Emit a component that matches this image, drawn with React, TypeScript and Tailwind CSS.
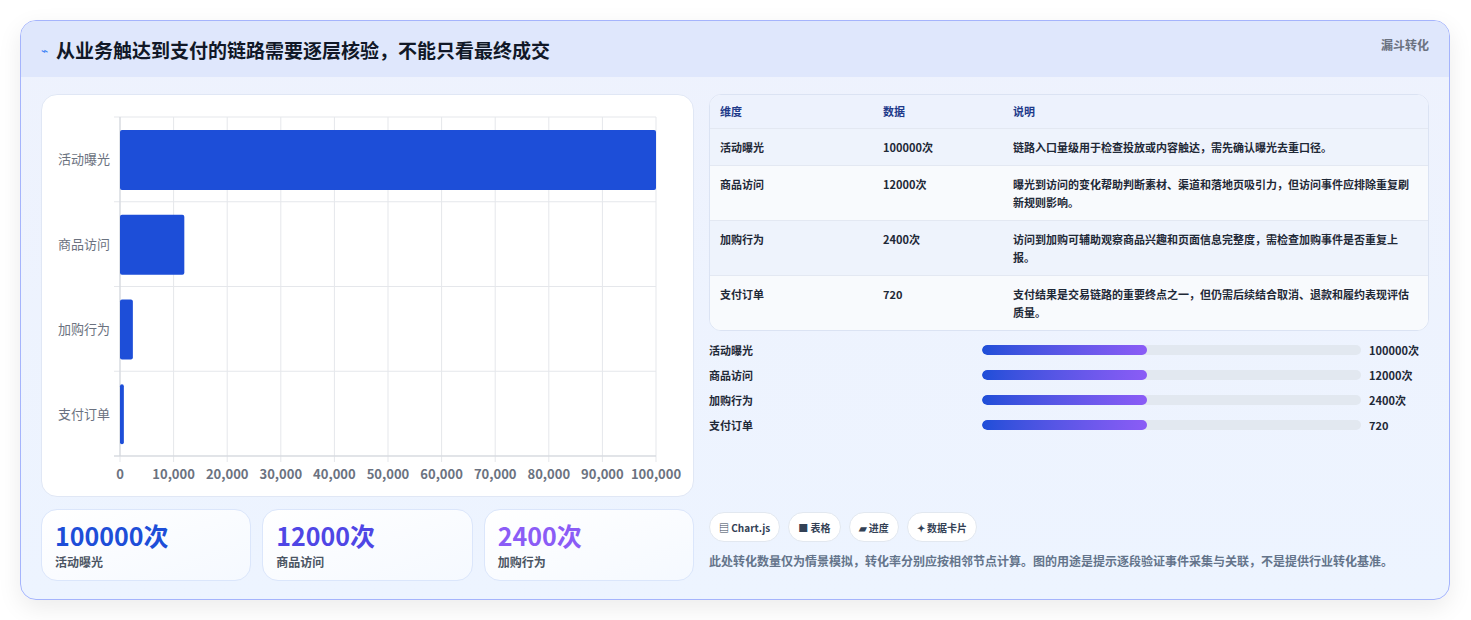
import React from 'react';

const rows = [
  { name: '活动曝光', value: 100000, text: '100000次', desc: '链路入口量级用于检查投放或内容触达，需先确认曝光去重口径。' },
  { name: '商品访问', value: 12000, text: '12000次', desc: '曝光到访问的变化帮助判断素材、渠道和落地页吸引力，但访问事件应排除重复刷新规则影响。' },
  { name: '加购行为', value: 2400, text: '2400次', desc: '访问到加购可辅助观察商品兴趣和页面信息完整度，需检查加购事件是否重复上报。' },
  { name: '支付订单', value: 720, text: '720', desc: '支付结果是交易链路的重要终点之一，但仍需后续结合取消、退款和履约表现评估质量。' },
];

const font = { fontFamily: '"Noto Sans CJK SC", "Noto Sans", sans-serif' };

// plot geometry inside the chart card
const L = 78, R = 614, T = 22, B = 361;

const BarChart: React.FC = () => {
  const rowH = (B - T) / 4;
  const ticks = Array.from({ length: 11 }, (_, i) => i * 10000);
  return (
    <svg width="653" height="403" className="block" style={font}>
      {ticks.map((t) => {
        const x = L + ((R - L) * t) / 100000;
        return (
          <g key={t}>
            <line x1={x} y1={T} x2={x} y2={B + 6} stroke="#e5e7eb" />
            <text x={x} y={384} textAnchor="middle" fontSize="13" fontWeight="600" fill="#6b7280">
              {t.toLocaleString('en-US')}
            </text>
          </g>
        );
      })}
      {[0, 1, 2, 3, 4].map((i) => (
        <line key={i} x1={L - 6} y1={T + i * rowH} x2={R} y2={T + i * rowH} stroke="#e5e7eb" />
      ))}
      <line x1={L} y1={T} x2={L} y2={B} stroke="#d1d5db" />
      <line x1={L - 6} y1={B} x2={R} y2={B} stroke="#d1d5db" />
      {rows.map((r, i) => {
        const y = T + i * rowH;
        const w = Math.max(3, ((R - L) * r.value) / 100000);
        return (
          <g key={r.name}>
            <rect x={L} y={y + 13} width={w} height={60} rx="2" fill="#1d4ed8" />
            <text x={L - 10} y={y + rowH / 2 + 5} textAnchor="end" fontSize="13" fill="#6b7280">
              {r.name}
            </text>
          </g>
        );
      })}
    </svg>
  );
};

const stats = [
  { v: '100000次', l: '活动曝光', c: 'text-[#1d4ed8]' },
  { v: '12000次', l: '商品访问', c: 'text-[#4f46e5]' },
  { v: '2400次', l: '加购行为', c: 'text-[#8b5cf6]' },
];

const chips = ['▤ Chart.js', '■ 表格', '▰ 进度', '✦ 数据卡片'];

export default function App() {
  return (
    <div className="min-h-[620px] bg-white px-5 pt-5" style={font}>
      <div className="w-[1430px] h-[580px] rounded-2xl border border-[#a5b4fc] bg-gradient-to-b from-[#eef2fd] to-[#edf4ff] shadow-[0_8px_24px_rgba(0,0,0,0.08)] overflow-hidden">
        <div className="h-[56px] bg-[#dfe7fc] flex items-start justify-between px-5">
          <div className="flex items-center gap-2 mt-[15px]">
            <span className="text-[#3b82f6] text-xs">⌁</span>
            <h1 className="text-[19px] font-bold text-[#111827]">从业务触达到支付的链路需要逐层核验，不能只看最终成交</h1>
          </div>
          <span className="mt-[16px] text-xs font-bold text-[#6b7280]">漏斗转化</span>
        </div>
        <div className="flex gap-[15px] px-5 pt-[17px]">
          <div className="w-[653px] flex flex-col gap-3">
            <div className="h-[403px] rounded-2xl border border-[#e0e7f5] bg-white overflow-hidden">
              <BarChart />
            </div>
            <div className="grid grid-cols-3 gap-[11px]">
              {stats.map((s) => (
                <div key={s.l} className="h-[72px] rounded-2xl border border-[#dbe6fb] bg-gradient-to-br from-white to-[#f5f9ff] px-[13px] pt-[9px]">
                  <div className={`text-[25px] font-bold leading-[32px] ${s.c}`}>{s.v}</div>
                  <div className="text-xs font-semibold text-[#4b5563] mt-[3px]">{s.l}</div>
                </div>
              ))}
            </div>
          </div>
          <div className="w-[724px] flex flex-col">
            <div className="rounded-xl border border-[#dbe3f3] overflow-hidden bg-white">
              <table className="w-full text-[11px] text-[#1f2937]">
                <thead>
                  <tr className="h-[33px] bg-[#edf2fd] text-[#1e3a8a] font-bold text-left">
                    <th className="pl-[10px] w-[173px]">维度</th>
                    <th className="w-[130px]">数据</th>
                    <th>说明</th>
                  </tr>
                </thead>
                <tbody>
                  {rows.map((r, i) => (
                    <tr key={r.name} className={`border-t border-[#e3e8f2] align-top font-semibold ${i % 2 === 0 ? 'bg-[#eef3fc]' : 'bg-[#f8fafd]'}`}>
                      <td className="pl-[10px] py-[10px]">{r.name}</td>
                      <td className="py-[10px]">{r.text}</td>
                      <td className="py-[9px] pr-3 leading-[18px]">{r.desc}</td>
                    </tr>
                  ))}
                </tbody>
              </table>
            </div>
            <div className="mt-[11px] flex flex-col gap-[9px]">
              {rows.map((r) => (
                <div key={r.name} className="flex items-center h-[16px] text-[11px] font-bold text-[#1f2937]">
                  <span className="w-[273px]">{r.name}</span>
                  <div className="w-[379px] h-[10px] rounded-full bg-[#e2e8f0] overflow-hidden">
                    <div className="w-[165px] h-full rounded-full bg-gradient-to-r from-[#1d4ed8] to-[#8b5cf6]" />
                  </div>
                  <span className="ml-2">{r.text}</span>
                </div>
              ))}
            </div>
            <div className="mt-[79px] flex gap-2">
              {chips.map((c) => (
                <span key={c} className="h-[30px] px-[9px] flex items-center rounded-full border border-[#e2e8f0] bg-white text-[10px] font-bold text-[#334155]">
                  {c}
                </span>
              ))}
            </div>
            <p className="mt-[9px] text-xs font-semibold leading-[20px] text-[#64748b]">
              此处转化数量仅为情景模拟，转化率分别应按相邻节点计算。图的用途是提示逐段验证事件采集与关联，不是提供行业转化基准。
            </p>
          </div>
        </div>
      </div>
    </div>
  );
}
